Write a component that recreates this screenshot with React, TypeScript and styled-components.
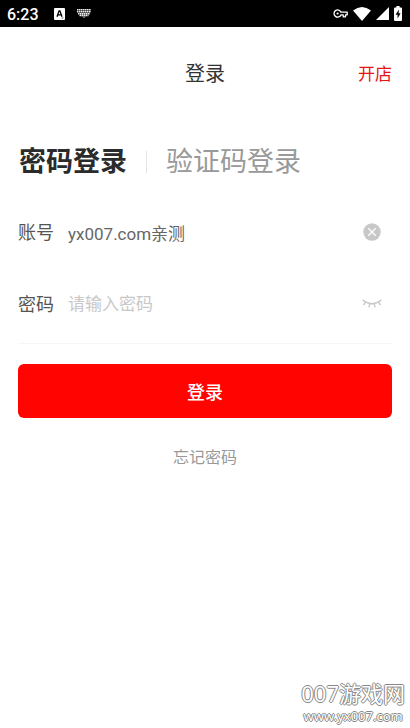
import React, { useState } from "react";
import styled, { createGlobalStyle } from "styled-components";

const GlobalStyle = createGlobalStyle`
  *, *::before, *::after { box-sizing: border-box; }
  body {
    margin: 0;
    background: #fff;
    color: #333;
    font-family: Roboto, "Noto Sans CJK SC", sans-serif;
  }
  button, input { font: inherit; }
`;

const Screen = styled.div`
  position: relative;
  display: flex;
  flex-direction: column;
  min-height: 100vh;
  background: #fff;
`;

const StatusBar = styled.div`
  display: flex;
  align-items: center;
  justify-content: space-between;
  height: 27px;
  padding: 0 8px 0 7px;
  background: #000;
  color: #fff;
`;

const StatusGroup = styled.div<{ $gap: number }>`
  display: flex;
  align-items: center;
  gap: ${(p) => p.$gap}px;
`;

const Clock = styled.time`
  margin-right: 3px;
  padding-top: 2px;
  font-size: 16px;
  font-weight: 500;
  line-height: 25px;
`;

const Header = styled.header`
  display: grid;
  grid-template-columns: 1fr auto 1fr;
  align-items: center;
  height: 94px;
  padding: 0 18px;
`;

const Title = styled.h1`
  grid-column: 2;
  margin: 0;
  font-size: 20px;
  font-weight: 400;
  line-height: 28px;
`;

const ShopLink = styled.a`
  justify-self: end;
  color: #e61414;
  font-size: 17px;
  line-height: 24px;
  text-decoration: none;
`;

const Main = styled.main`
  display: flex;
  flex-direction: column;
  padding: 20px 18px 0;
`;

const Tabs = styled.div`
  display: flex;
  align-items: center;
  height: 42px;
`;

const Tab = styled.button<{ $active: boolean }>`
  padding: 0 1px;
  border: 0;
  background: none;
  color: ${(p) => (p.$active ? "#2b2b2b" : "#999")};
  font-size: 27px;
  font-weight: ${(p) => (p.$active ? 700 : 400)};
  line-height: 42px;
  white-space: nowrap;
  cursor: pointer;
`;

const TabDivider = styled.span`
  width: 1px;
  height: 22px;
  margin: 0 18px;
  background: #e4e4e4;
`;

const Form = styled.form`
  display: flex;
  flex-direction: column;
  padding-top: 16px;
`;

const Field = styled.div<{ $lined?: boolean }>`
  display: flex;
  align-items: center;
  height: ${(p) => (p.$lined ? "79px" : "66px")};
  padding-right: 9px;
  border-bottom: ${(p) => (p.$lined ? "1px solid #f6f6f6" : "0")};
`;

const Label = styled.label`
  width: 50px;
  padding-top: 2px;
  color: #555;
  font-size: 18px;
  line-height: 28px;
`;

const Input = styled.input`
  flex: 1;
  min-width: 0;
  height: 26px;
  padding: 0;
  border: 0;
  outline: 0;
  background: none;
  color: #666;
  font-size: 17px;
  &::placeholder { color: #c8c8c8; opacity: 1; }
`;

const IconButton = styled.button`
  display: flex;
  align-items: center;
  justify-content: center;
  width: 22px;
  height: 22px;
  padding: 0;
  border: 0;
  background: none;
  cursor: pointer;
`;

const Submit = styled.button`
  height: 54px;
  margin-top: 20px;
  padding: 3px 0 0;
  border: 0;
  border-radius: 6px;
  background: #ff0400;
  color: #fff;
  font-size: 18px;
  font-weight: 500;
  line-height: 28px;
  cursor: pointer;
`;

const ForgotLink = styled.a`
  align-self: center;
  margin-top: 28px;
  color: #999;
  font-size: 16px;
  line-height: 24px;
  text-decoration: none;
`;

const Watermark = styled.div`
  position: absolute;
  right: 5px;
  bottom: 3px;
  display: flex;
  flex-direction: column;
  align-items: center;
  color: #fff;
  text-shadow: 1px 0 #888, -1px 0 #888, 0 1px #888, 0 -1px #888;
  pointer-events: none;
`;

const SiteName = styled.span`
  font-family: "Open Sans", "Noto Sans CJK SC", sans-serif;
  font-size: 22px;
  line-height: 28px;
`;

const SiteAddress = styled.span`
  font-family: "Noto Sans", sans-serif;
  font-size: 13px;
  line-height: 18px;
`;

const InputModeIcon = () => (
  <svg width="11" height="12" viewBox="0 0 11 12" aria-hidden="true">
    <rect width="11" height="12" rx="1" fill="#fff" />
    <path d="M3 8.8 5.1 2.8h.8L8 8.8M3.8 6.8h3.4" fill="none" stroke="#000" strokeWidth="1.3" />
    <path d="M7.5 10h2" stroke="#777" />
  </svg>
);

const KeyboardIcon = () => (
  <svg width="14" height="9" viewBox="0 0 14 9" aria-hidden="true">
    <path
      d="M0 .8h14M0 2.8h14M1 4.8h12M2.5 6.6h9"
      stroke="#eee"
      strokeWidth="1.5"
      strokeDasharray="1.6 .4"
    />
    <path d="M5 7.6h4L7 9z" fill="#aaa" />
  </svg>
);

const KeyIcon = () => (
  <svg width="15" height="9" viewBox="0 0 15 9" aria-hidden="true">
    <path
      d="M8 3.2A3.6 3.6 0 1 0 8 5.8h2.2v2h2.3v-2h1.7V3.2z"
      fill="none"
      stroke="#fff"
      strokeWidth="1.3"
      strokeLinejoin="round"
    />
    <circle cx="4.6" cy="4.5" r="1.1" fill="#fff" />
  </svg>
);

const WifiIcon = () => (
  <svg width="18" height="14" viewBox="0 0 18 14" aria-hidden="true">
    <path d="M0 3.6Q9-3.4 18 3.6L9 14z" fill="#fff" />
  </svg>
);

const SignalIcon = () => (
  <svg width="13" height="13" viewBox="0 0 13 13" aria-hidden="true">
    <path d="M13 0v13H0z" fill="#fff" />
  </svg>
);

const BatteryIcon = () => (
  <svg width="8" height="15" viewBox="0 0 8 15" aria-hidden="true">
    <path d="M2.4 0h3.2v1.6H7q1 0 1 1V14q0 1-1 1H1q-1 0-1-1V2.6q0-1 1-1h1.4z" fill="#fff" />
    <path d="M4.9 3.6 1.6 8.8h2v3.8l3-5.3h-2z" fill="#000" />
  </svg>
);

const ClearIcon = () => (
  <svg width="18" height="18" viewBox="0 0 18 18" aria-hidden="true">
    <circle cx="9" cy="9" r="8.7" fill="#c8c8c8" />
    <path d="m5.3 5.3 7.4 7.4m0-7.4-7.4 7.4" stroke="#fff" strokeWidth="1.3" />
  </svg>
);

const ClosedEyeIcon = () => (
  <svg width="20" height="10" viewBox="0 0 20 10" aria-hidden="true">
    <path
      d="M1 1.2Q10 8.4 19 1.2M3.6 3.1 1.7 5.6M7.9 4.6 7 7.8M12.1 4.6l.9 3.2M16.4 3.1l1.9 2.5"
      fill="none"
      stroke="#c8c8c8"
      strokeWidth="1.4"
      strokeLinecap="round"
    />
  </svg>
);

export default function App() {
  const [mode, setMode] = useState<"password" | "code">("password");
  const [account, setAccount] = useState("yx007.com亲测");
  const [password, setPassword] = useState("");
  const [visible, setVisible] = useState(false);

  return (
    <Screen>
      <GlobalStyle />
      <StatusBar>
        <StatusGroup $gap={12}>
          <Clock>6:23</Clock>
          <InputModeIcon />
          <KeyboardIcon />
        </StatusGroup>
        <StatusGroup $gap={5}>
          <KeyIcon />
          <WifiIcon />
          <SignalIcon />
          <BatteryIcon />
        </StatusGroup>
      </StatusBar>
      <Header>
        <Title>登录</Title>
        <ShopLink href="#shop">开店</ShopLink>
      </Header>
      <Main>
        <Tabs role="tablist">
          <Tab role="tab" aria-selected={mode === "password"} $active={mode === "password"} onClick={() => setMode("password")}>
            密码登录
          </Tab>
          <TabDivider />
          <Tab role="tab" aria-selected={mode === "code"} $active={mode === "code"} onClick={() => setMode("code")}>
            验证码登录
          </Tab>
        </Tabs>
        <Form onSubmit={(e) => e.preventDefault()}>
          <Field>
            <Label htmlFor="account">账号</Label>
            <Input id="account" value={account} onChange={(e) => setAccount(e.target.value)} />
            <IconButton type="button" aria-label="清除" onClick={() => setAccount("")}>
              <ClearIcon />
            </IconButton>
          </Field>
          <Field $lined>
            <Label htmlFor="password">密码</Label>
            <Input
              id="password"
              type={visible ? "text" : "password"}
              placeholder="请输入密码"
              value={password}
              onChange={(e) => setPassword(e.target.value)}
            />
            <IconButton type="button" aria-label="显示密码" onClick={() => setVisible(!visible)}>
              <ClosedEyeIcon />
            </IconButton>
          </Field>
          <Submit type="submit">登录</Submit>
          <ForgotLink href="#forgot">忘记密码</ForgotLink>
        </Form>
      </Main>
      <Watermark>
        <SiteName>007游戏网</SiteName>
        <SiteAddress>www.yx007.com</SiteAddress>
      </Watermark>
    </Screen>
  );
}
